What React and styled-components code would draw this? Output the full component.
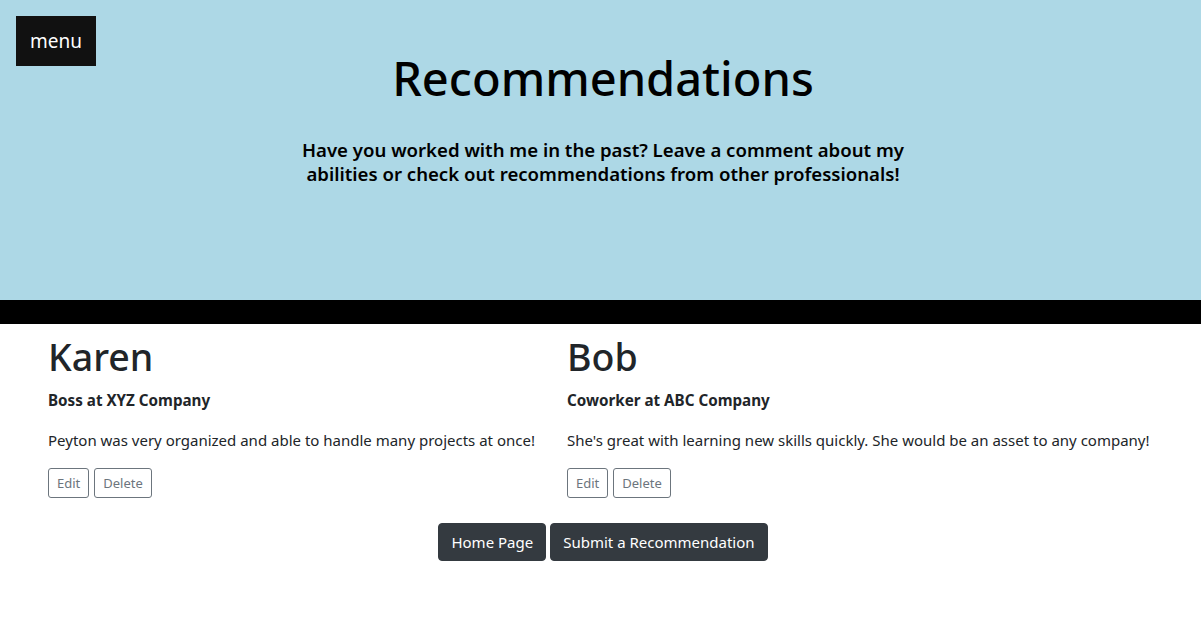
import React from 'react';
import styled, { createGlobalStyle } from 'styled-components';

const GlobalStyle = createGlobalStyle`
  html, body {
    margin: 0;
    padding: 0;
    background: #fff;
    font-family: "Noto Sans", "Open Sans", sans-serif;
    color: #212529;
  }
`;

const Header = styled.header`
  position: relative;
  height: 300px;
  background: #add8e6;
  display: flex;
  flex-direction: column;
  align-items: center;
  padding-left: 5px;
  box-sizing: border-box;
`;

const MenuButton = styled.button`
  position: absolute;
  top: 16px;
  left: 16px;
  width: 80px;
  height: 50px;
  border: none;
  background: #111;
  color: #fff;
  font-family: inherit;
  font-size: 19px;
  cursor: pointer;
`;

const Title = styled.h1`
  margin: 47px 0 0;
  font-size: 47px;
  font-weight: 500;
  line-height: 62px;
  color: #000;
`;

const Lead = styled.h5`
  margin: 29px 0 0;
  width: 620px;
  font-size: 18.6px;
  font-weight: 600;
  line-height: 24px;
  text-align: center;
  color: #000;
`;

const Divider = styled.div`
  height: 24px;
  background: #000;
`;

const Row = styled.div`
  display: grid;
  grid-template-columns: 519px 519px;
  padding: 9px 0 0 48px;
`;

const Card = styled.div`
  display: flex;
  flex-direction: column;
  align-items: flex-start;
`;

const Name = styled.h2`
  margin: 0;
  font-size: 37.5px;
  font-weight: 500;
  line-height: 48px;
`;

const Role = styled.div`
  margin-top: 7px;
  font-size: 15.2px;
  font-weight: 700;
  line-height: 24px;
`;

const Text = styled.p`
  margin: 16px 0 0;
  font-size: 15px;
  line-height: 24px;
  white-space: nowrap;
`;

const Actions = styled.div`
  display: flex;
  gap: 5px;
  margin-top: 16px;
`;

const SmallButton = styled.button`
  height: 30px;
  padding: 0 8px;
  border: 1px solid #6c757d;
  border-radius: 3px;
  background: transparent;
  color: #6c757d;
  font-family: inherit;
  font-size: 13px;
  cursor: pointer;
`;

const Footer = styled.div`
  display: flex;
  justify-content: center;
  gap: 4px;
  margin-top: 25px;
  padding-left: 5px;
`;

const DarkButton = styled.button`
  height: 38px;
  padding: 0 12px;
  border: 1px solid #343a40;
  border-radius: 4px;
  background: #343a40;
  color: #fff;
  font-family: inherit;
  font-size: 15px;
  cursor: pointer;
`;

const recommendations = [
  {
    name: 'Karen',
    role: 'Boss at XYZ Company',
    text: 'Peyton was very organized and able to handle many projects at once!',
  },
  {
    name: 'Bob',
    role: 'Coworker at ABC Company',
    text: "She's great with learning new skills quickly. She would be an asset to any company!",
  },
];

const App = () => (
  <>
    <GlobalStyle />
    <Header>
      <MenuButton>menu</MenuButton>
      <Title>Recommendations</Title>
      <Lead>
        Have you worked with me in the past? Leave a comment about my abilities or check
        out recommendations from other professionals!
      </Lead>
    </Header>
    <Divider />
    <Row>
      {recommendations.map(r => (
        <Card key={r.name}>
          <Name>{r.name}</Name>
          <Role>{r.role}</Role>
          <Text>{r.text}</Text>
          <Actions>
            <SmallButton>Edit</SmallButton>
            <SmallButton>Delete</SmallButton>
          </Actions>
        </Card>
      ))}
    </Row>
    <Footer>
      <DarkButton>Home Page</DarkButton>
      <DarkButton>Submit a Recommendation</DarkButton>
    </Footer>
  </>
);

export default App;
